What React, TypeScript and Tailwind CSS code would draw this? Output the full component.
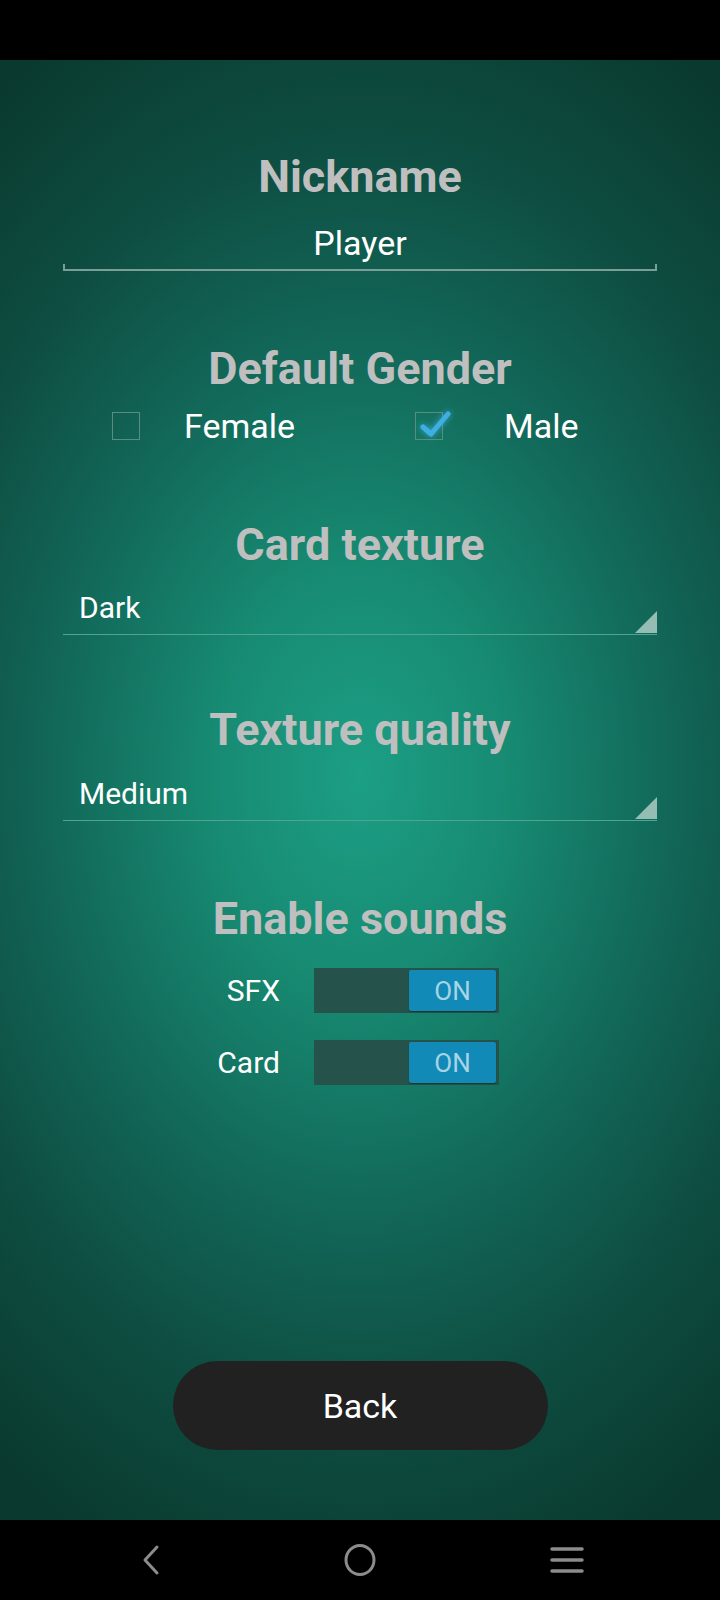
import React from "react";

const font = { fontFamily: "Roboto, 'Noto Sans', 'Liberation Sans', sans-serif" };

function Title({ children, mt }: { children: React.ReactNode; mt: string }) {
  return (
    <div className={`${mt} text-[45px] leading-none font-bold text-[#bfbfbf] text-center whitespace-nowrap`}>
      {children}
    </div>
  );
}

function Dropdown({ value, mt }: { value: string; mt: string }) {
  return (
    <div className={`${mt} relative w-full border-b border-[#4ea592] pl-[16px] pb-[11px]`}>
      <div className="text-[30px] leading-none text-white">{value}</div>
      <svg className="absolute right-0 bottom-[1px]" width="22" height="22" viewBox="0 0 22 22">
        <polygon points="22,0 22,22 0,22" fill="#95bdb3" />
      </svg>
    </div>
  );
}

function Toggle() {
  return (
    <div className="w-[185px] h-[45px] bg-[#25524a] flex items-center justify-end pr-[3px]">
      <div className="w-[87px] h-[41px] bg-[#118ab8] rounded-[2px] shadow-[0_1px_1px_rgba(0,0,0,0.35)] flex items-center justify-center text-[26px] leading-none text-[#a8d4e4]">
        ON
      </div>
    </div>
  );
}

function SoundRow({ label, mt }: { label: string; mt: string }) {
  return (
    <div className={`${mt} w-full flex items-center`}>
      <div className="w-[217px] text-right text-[30px] leading-none text-white">{label}</div>
      <div className="ml-[34px]">
        <Toggle />
      </div>
    </div>
  );
}

export default function App() {
  return (
    <div className="w-[720px] h-[1600px] flex flex-col bg-black" style={font}>
      <div className="h-[60px] bg-black shrink-0" />
      <div className="h-[1460px] shrink-0 flex flex-col items-center px-[63px] bg-[radial-gradient(ellipse_600px_850px_at_50%_49%,#1c9f85_0%,#178a72_25%,#12695a_50%,#0e4d41_75%,#0a3a2f_100%)]">
        <Title mt="mt-[94px]">Nickname</Title>
        <div className="mt-[27px] text-[34px] leading-none text-white">Player</div>
        <div className="mt-[4px] w-full h-[7px] border-x-2 border-b-2 border-[#7b9f96]" />

        <Title mt="mt-[75px]">Default Gender</Title>
        <div className="mt-[18px] w-full h-[34px] pl-[49px] flex items-center">
          <div className="w-[303px] flex items-center">
            <div className="w-[28px] h-[28px] border-[1.5px] border-[#5b8c80]" />
            <div className="ml-[44px] text-[34px] leading-none text-white">Female</div>
          </div>
          <div className="flex items-center">
            <div className="relative w-[28px] h-[28px] border-[1.5px] border-[#5b8c80]">
              <svg
                className="absolute left-[-2px] top-[-6px] drop-shadow-[0_0_3px_rgba(70,180,235,0.8)]"
                width="40"
                height="34"
                viewBox="0 0 40 34"
              >
                <polyline
                  points="9,20 17,27 34,7"
                  fill="none"
                  stroke="#3eaee3"
                  strokeWidth="5"
                  strokeLinecap="round"
                  strokeLinejoin="round"
                />
              </svg>
            </div>
            <div className="ml-[61px] text-[34px] leading-none text-white">Male</div>
          </div>
        </div>

        <Title mt="mt-[79px]">Card texture</Title>
        <Dropdown value="Dark" mt="mt-[26px]" />

        <Title mt="mt-[72px]">Texture quality</Title>
        <Dropdown value="Medium" mt="mt-[27px]" />

        <Title mt="mt-[75px]">Enable sounds</Title>
        <SoundRow label="SFX" mt="mt-[27px]" />
        <SoundRow label="Card" mt="mt-[27px]" />

        <button className="mt-[276px] w-[375px] h-[89px] rounded-full bg-[#212121] text-white text-[34px] leading-none flex items-center justify-center">
          Back
        </button>
      </div>
      <div className="h-[80px] shrink-0 bg-black flex justify-center items-center">
        <div className="w-[207px] flex justify-center">
          <svg width="30" height="32" viewBox="0 0 30 32">
            <polyline points="19,3 7,16 19,29" fill="none" stroke="#8c8c8c" strokeWidth="3" strokeLinecap="round" strokeLinejoin="round" />
          </svg>
        </div>
        <div className="w-[207px] flex justify-center">
          <svg width="34" height="34" viewBox="0 0 34 34">
            <ellipse cx="17" cy="17" rx="14" ry="14.5" fill="none" stroke="#8c8c8c" strokeWidth="3" />
          </svg>
        </div>
        <div className="w-[207px] flex justify-center">
          <svg width="36" height="30" viewBox="0 0 36 30">
            <line x1="3" y1="4" x2="33" y2="4" stroke="#8c8c8c" strokeWidth="3.5" strokeLinecap="round" />
            <line x1="3" y1="15" x2="33" y2="15" stroke="#8c8c8c" strokeWidth="3.5" strokeLinecap="round" />
            <line x1="3" y1="26" x2="33" y2="26" stroke="#8c8c8c" strokeWidth="3.5" strokeLinecap="round" />
          </svg>
        </div>
      </div>
    </div>
  );
}
